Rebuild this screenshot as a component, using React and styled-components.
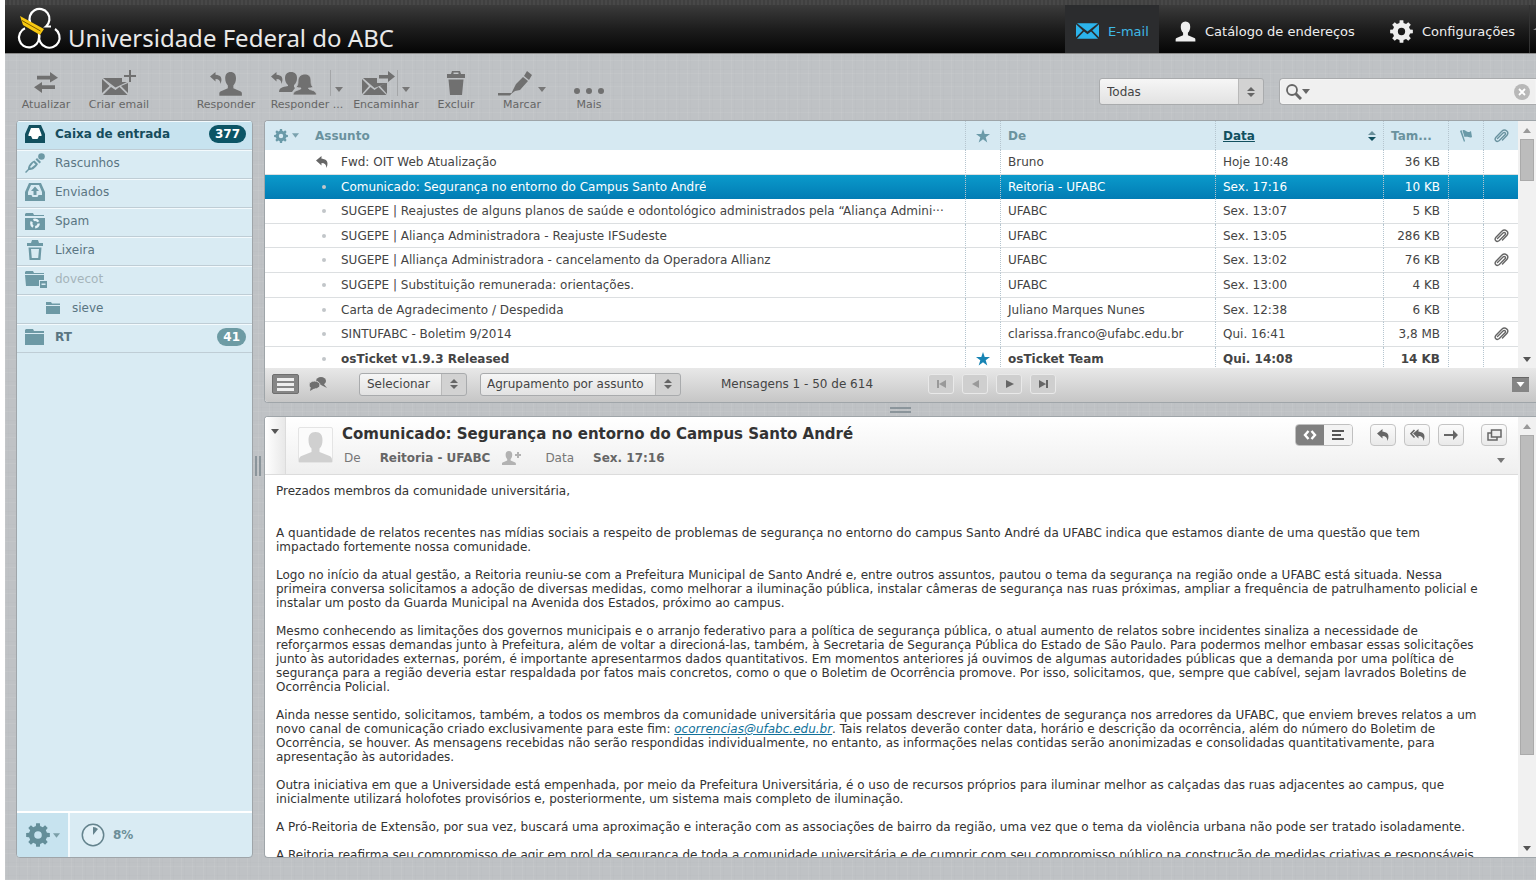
import React from "react";
import styled, { createGlobalStyle, css } from "styled-components";

const Global = createGlobalStyle`
  * { box-sizing: border-box; }
  html, body, #root { height: 100%; }
  body { margin: 0; background: #fff; overflow: hidden; font-family: "DejaVu Sans", sans-serif; font-size: 12px; color: #444; }
  button, input, select { font: inherit; color: inherit; }
  button { padding: 0; border: 0; background: none; cursor: pointer; }
  svg { display: block; flex: none; }
  ul { list-style: none; margin: 0; padding: 0; }
`;

const Page = styled.div`
  height: 100%;
  margin-left: 5px;
  display: flex;
  flex-direction: column;
  background-color: #bfc2c5;
  background-image:
    repeating-linear-gradient(90deg, rgba(255,255,255,.06) 0 1px, transparent 1px 3px, rgba(90,95,100,.02) 3px 4px, transparent 4px 11px),
    repeating-linear-gradient(0deg, rgba(255,255,255,.06) 0 1px, transparent 1px 4px, rgba(90,95,100,.02) 4px 5px, transparent 5px 13px);
`;
const TopStrip = styled.div`
  flex: none;
  height: 5px;
  background: repeating-linear-gradient(90deg, #484848 0 2px, #404040 2px 4px);
`;
const Header = styled.header`
  flex: none;
  height: 49px;
  display: flex;
  justify-content: space-between;
  background: linear-gradient(#3b3b3b, #1d1d1d 50%, #050505);
  border-bottom: 1px solid #888;
`;
const Brand = styled.div`
  display: flex;
  padding-left: 12px;
  gap: 6px;
  color: #e9e9e9;
  font: 24px/32px "Noto Sans", sans-serif;
  white-space: nowrap;
  & > span { margin-top: 17px; }
`;
const Tasks = styled.nav`
  display: flex;
`;
const Task = styled.a`
  display: flex;
  align-items: center;
  gap: 9px;
  min-width: ${(p) => p.$w}px;
  padding: 4px 0 0 11px;
  margin-right: ${(p) => p.$after || 0}px;
  font-size: 13px;
  white-space: nowrap;
  text-decoration: none;
  color: ${(p) => (p.$active ? "#3fb9e6" : "#eee")};
  background: ${(p) => (p.$active ? "#2b2c2e" : "none")};
`;
const TaskEdge = styled.div`
  width: 7px;
  border-left: 1px solid #333;
  display: flex;
  align-items: center;
  justify-content: flex-end;
`;

const Toolbar = styled.div`
  flex: none;
  height: 66px;
  display: flex;
  justify-content: space-between;
  padding-left: 6px;
`;
const Tools = styled.div`
  display: flex;
  align-items: flex-start;
  padding-top: 14px;
`;
const ToolButton = styled.button`
  width: ${(p) => p.$w}px;
  margin-right: ${(p) => p.$after || 0}px;
  display: flex;
  flex-direction: column;
  align-items: center;
  font-size: 11px;
  line-height: 14px;
  color: #666;
  white-space: nowrap;
`;
const ToolIcon = styled.span`
  height: 30px;
  display: flex;
  align-items: center;
`;
const Split = styled.span`
  display: flex;
  align-items: center;
  height: 26px;
  margin-left: ${(p) => p.$gap}px;
  padding: 12px 0 0 4px;
  border-left: 1px solid ${(p) => (p.$line ? "#a4a6a8" : "transparent")};
`;
const Filters = styled.div`
  display: flex;
  gap: 15px;
  padding-top: 24px;
`;
const SelectBox = styled.label`
  position: relative;
  display: block;
  width: ${(p) => p.$w}px;
  height: ${(p) => p.$h}px;
  border: 1px solid #a9abad;
  border-radius: 3px;
  background: linear-gradient(90deg, transparent calc(100% - 25px), #b9b9b9 calc(100% - 25px), #b9b9b9 calc(100% - 24px), #d2d2d2 0), linear-gradient(#f6f6f6, #e2e2e2);
  & > select {
    appearance: none;
    width: 100%;
    height: 100%;
    padding: 0 0 0 ${(p) => p.$pad || 7}px;
    border: 0;
    background: none;
    outline: none;
  }
  & > svg { position: absolute; right: 8px; top: calc(50% - 5px); pointer-events: none; }
`;
const Search = styled.label`
  width: 257px;
  height: 27px;
  display: flex;
  align-items: center;
  padding: 0 6px;
  border: 1px solid #a9abad;
  border-right: 0;
  border-radius: 4px 0 0 4px;
  background: #f0f0f0;
  box-shadow: inset 0 0 2px #fff;
  & > input { flex: 1; min-width: 0; border: 0; background: none; outline: none; }
`;

const Main = styled.div`
  flex: 1;
  min-height: 0;
  display: flex;
  gap: 11px;
  padding: 0 0 22px 11px;
`;
const Sidebar = styled.aside`
  flex: none;
  width: 237px;
  display: flex;
  flex-direction: column;
  border: 1px solid #9fa5a9;
  border-radius: 4px;
  background: #d9ebf3;
  overflow: hidden;
`;
const Folders = styled.ul`
  flex: 1;
`;
const Folder = styled.li`
  height: 29px;
  display: flex;
  align-items: center;
  padding: 0 6px 2px ${(p) => (p.$sub ? 29 : 8)}px;
  border-bottom: 1px solid #bfcdd5;
  box-shadow: inset 0 1px #f3fafd;
  background: ${(p) => (p.$active ? "#c7e3ef" : "none")};
  color: ${(p) => (p.$active ? "#164c5c" : p.$dim ? "#a5b4ba" : "#5a7582")};
  font-weight: ${(p) => (p.$bold ? 700 : 400)};
`;
const FolderLink = styled.a`
  flex: 1;
  display: flex;
  align-items: center;
  gap: ${(p) => (p.$sub ? 12 : 10)}px;
  color: inherit;
  text-decoration: none;
`;
const FolderIcon = styled.span`
  width: ${(p) => (p.$sub ? 14 : 20)}px;
`;
const Badge = styled.span`
  padding: 0 6px;
  border-radius: 9px;
  background: ${(p) => (p.$dark ? "#0c5566" : "#6d9ba4")};
  color: #fff;
  line-height: 18px;
  font-weight: 700;
`;
const SideFoot = styled.div`
  height: 46px;
  display: flex;
  border-top: 2px solid #fff;
`;
const GearButton = styled.button`
  width: 53px;
  display: flex;
  align-items: center;
  justify-content: center;
  gap: 3px;
  background: #c7e3ef;
  border-right: 2px solid #f3fafd;
`;
const Quota = styled.div`
  display: flex;
  align-items: center;
  gap: 8px;
  padding-left: 11px;
  font-weight: 700;
  color: #6c8e98;
`;
const Grip = styled.div`
  flex: none;
  height: 13px;
  display: flex;
  flex-direction: ${(p) => (p.$row ? "row" : "column")};
  align-items: center;
  justify-content: center;
  gap: 2px;
  &::before, &::after {
    content: "";
    background: #8b959b;
    ${(p) => (p.$row ? css`width: 2px; height: 20px;` : css`width: 21px; height: 2px;`)}
  }
`;
const SideGrip = styled(Grip)`
  width: 10px;
  height: 20px;
  margin: 336px 0 0 -11px;
`;
const Content = styled.div`
  flex: 1;
  min-width: 0;
  display: flex;
  flex-direction: column;
  margin-left: -10px;
`;
const ListPanel = styled.section`
  flex: none;
  height: 283px;
  display: flex;
  flex-direction: column;
  border: 1px solid #9fa5a9;
  border-right: 0;
  border-radius: 4px 0 0 4px;
  background: #fff;
  overflow: hidden;
`;
const Scroller = styled.div`
  flex: 1;
  min-height: 0;
  display: flex;
`;
const TableClip = styled.div`
  flex: 1;
  min-width: 0;
  overflow: hidden;
`;
const Mails = styled.table`
  width: 100%;
  table-layout: fixed;
  border-collapse: separate;
  border-spacing: 0;
  line-height: 16px;
  th, td {
    padding: 0 7px;
    text-align: left;
    font-weight: inherit;
    white-space: nowrap;
    overflow: hidden;
    text-overflow: ellipsis;
    border-left: 1px dotted #b5c5cf;
  }
  th:first-child, td:first-child { border-left: 0; }
  td.num { text-align: right; padding-right: 8px; }
  th > svg, td > svg { margin: 0 auto; }
`;
const HeadRow = styled.tr`
  height: 29px;
  background: #d6e9f2;
  color: #6a929e;
  font-weight: 700;
`;
const MailRow = styled.tr`
  height: 25px;
  color: ${(p) => (p.$on ? "#fff" : "#444")};
  font-weight: ${(p) => (p.$unread ? 700 : 400)};
  background: ${(p) => (p.$on ? "linear-gradient(#0b9acb, #017cb4)" : "#fff")};
  &:nth-child(5n + 2), &:nth-child(5n + 4) { height: 24px; }
  td { border-bottom: ${(p) => (p.$on ? 0 : "1px solid #dcdfe1")}; }
`;
const HeadCell = styled.span`
  display: flex;
  align-items: center;
  justify-content: space-between;
`;
const SubjectHead = styled.span`
  display: flex;
  align-items: center;
  gap: 16px;
  & > button { display: flex; align-items: center; gap: 4px; padding-left: 2px; }
`;
const SortLink = styled.a`
  color: #12505f;
`;
const Subject = styled.span`
  display: flex;
  align-items: center;
  gap: 9px;
  padding-left: 44px;
  & > i { flex: none; width: 16px; }
  & > i::before { content: ""; display: block; width: 4px; height: 4px; margin: 0 auto; border-radius: 2px; background: #c2c6c9; }
  & > i:has(svg)::before { display: none; }
  & > span { overflow: hidden; text-overflow: ellipsis; }
`;
const Scrollbar = styled.div`
  flex: none;
  width: 18px;
  display: flex;
  flex-direction: column;
  align-items: center;
  justify-content: space-between;
  padding: 7px 1px 6px;
  background: #f1f1f1;
`;
const Thumb = styled.div`
  width: 14px;
  height: ${(p) => p.$h}px;
  margin: 6px 0 auto;
  background: #bcbcbc;
  border: 1px solid #aaa;
`;
const ListFoot = styled.div`
  flex: none;
  height: 34px;
  display: flex;
  align-items: center;
  padding: 0 7px 2px;
  background: linear-gradient(#e8e8e8, #c6c6c6);
`;
const ModeButton = styled.button`
  width: ${(p) => (p.$on ? 27 : 20)}px;
  height: 20px;
  display: flex;
  align-items: center;
  justify-content: center;
  margin-right: ${(p) => (p.$on ? 9 : 31)}px;
  background: ${(p) => (p.$on ? "#868686" : "none")};
  border: ${(p) => (p.$on ? "1px solid #6f6f6f" : "0")};
  border-radius: 2px;
`;
const Gap = styled.div`
  width: ${(p) => p.$w}px;
`;
const Count = styled.span`
  width: 206px;
  padding-left: 40px;
  white-space: nowrap;
`;
const Pager = styled.div`
  display: flex;
  gap: 8px;
`;
const PageButton = styled.button`
  width: 26px;
  height: 20px;
  display: flex;
  align-items: center;
  justify-content: center;
  border: 1px solid #e9e9e9;
  border-radius: 3px;
  background: #cfcfcf;
  color: ${(p) => (p.disabled ? "#999" : "#666")};
`;
const Collapse = styled.button`
  width: 17px;
  height: 15px;
  margin-left: auto;
  display: flex;
  align-items: center;
  justify-content: center;
  background: #858585;
  border-top: 1px solid #666;
`;
const PreviewPanel = styled.section`
  flex: 1;
  min-height: 0;
  display: flex;
  border: 1px solid #9fa5a9;
  border-right: 0;
  border-radius: 4px 0 0 4px;
  background: #fff;
  overflow: hidden;
`;
const Message = styled.article`
  flex: 1;
  min-width: 0;
  overflow: hidden;
`;
const MessageHead = styled.header`
  height: 58px;
  display: flex;
  border-bottom: 1px solid #dcdcdc;
  background: linear-gradient(#fff, #efefef);
`;
const Toggle = styled.button`
  width: 21px;
  padding-top: 12px;
  display: flex;
  justify-content: center;
  align-items: flex-start;
  border-right: 1px solid #dcdcdc;
  background: linear-gradient(90deg, #fff, #e8e8e8);
`;
const Avatar = styled.div`
  width: 35px;
  height: 36px;
  margin: 10px 0 0 12px;
  border: 1px solid #e4e4e4;
  border-radius: 2px;
  background: #fbfbfb;
`;
const Headings = styled.div`
  flex: 1;
  min-width: 0;
  padding: 7px 0 0 9px;
`;
const Title = styled.h2`
  margin: 0;
  font-size: 15px;
  line-height: 20px;
  color: #333;
`;
const Meta = styled.div`
  display: flex;
  align-items: center;
  padding-left: 2px;
  margin-top: 5px;
  line-height: 18px;
  color: #777;
  b { color: #666; margin: 0 12px 0 19px; }
  svg + span { margin-left: 24px; }
`;
const Side = styled.div`
  padding: 7px 11px 0 0;
  display: flex;
  flex-direction: column;
  align-items: flex-end;
  gap: 12px;
  & > svg { margin-right: 2px; }
`;
const Actions = styled.div`
  display: flex;
  gap: 8px;
`;
const Action = styled.button`
  width: 26px;
  height: 22px;
  display: flex;
  align-items: center;
  justify-content: center;
  border: 1px solid #c4c4c4;
  border-radius: 4px;
  background: linear-gradient(#fbfbfb, #e9e9e9);
  margin-left: ${(p) => p.$before || 0}px;
`;
const Segments = styled.div`
  display: flex;
  margin-right: 9px;
  border: 1px solid #c0c0c0;
  border-radius: 4px;
  overflow: hidden;
`;
const Segment = styled.button`
  width: 28px;
  height: 20px;
  display: flex;
  align-items: center;
  justify-content: center;
  background: ${(p) => (p.$on ? "#808080" : "#f3f3f3")};
`;
const Text = styled.div`
  padding: 9px 0 0 11px;
  line-height: 14px;
  color: #333;
  white-space: nowrap;
  p { margin: 0 0 14px; }
  p:first-child { margin-bottom: 28px; }
  a { color: #11719a; font-style: italic; }
`;

const Caret = ({ c = "#777", w = 8 }) => (
  <svg width={w} height="5" viewBox="0 0 8 5"><path d="M0 0h8L4 5z" fill={c} /></svg>
);
const CaretUp = () => <svg width="8" height="5" viewBox="0 0 8 5"><path d="M0 5h8L4 0z" fill="#999" /></svg>;
const UpDown = ({ up = "#666", down = "#666", w = 8 }) => (
  <svg width={w} height="10" viewBox="0 0 8 10"><path d="M0 4h8L4 0z" fill={up} /><path d="M0 6h8L4 10z" fill={down} /></svg>
);
const Envelope = ({ c = "#707070", w = 27, h = 18 }) => (
  <svg width={w} height={h} viewBox="0 0 24 16" fill={c}>
    <path d="M1 0h22L12 8.500z" /><path d="M0 1l7 6.500L0 14.500zM24 1l-7 6.500 7 7zM1 16l7.300-7.400L12 11.400l3.700-2.800L23 16z" />
  </svg>
);
const person = "M8 0c3 0 4.500 2 4.500 5 0 2.500-.9 4.600-2.200 5.700V13l6.200 2.600c.6.3.9.8.9 1.400V19H-1.400v-2c0-.6.300-1.100.9-1.400L5.700 13v-2.300C4.400 9.600 3.500 7.500 3.500 5 3.500 2 5 0 8 0z";
const gear = (n, r1, r2) => {
  const pts = [];
  for (let i = 0; i < n; i++) {
    for (const [f, r] of [[-0.3, r1], [-0.2, r2], [0.2, r2], [0.3, r1]]) {
      const a = ((i + f) / n) * Math.PI * 2;
      pts.push(`${(12 + r * Math.sin(a)).toFixed(2)} ${(12 - r * Math.cos(a)).toFixed(2)}`);
    }
  }
  return `M${pts.join("L")}z`;
};
const Gear = ({ c, s }) => (
  <svg width={s} height={s} viewBox="0 0 24 24">
    <path fillRule="evenodd" fill={c} d={gear(8, 9.2, 12) + "M12 8.200a3.800 3.800 0 1 0 0 7.600a3.800 3.800 0 1 0 0-7.600z"} />
  </svg>
);
const Star = ({ c }) => (
  <svg width="14" height="14" viewBox="0 0 14 14"><path fill={c} d="M7 0l1.700 5H14L9.700 8.200 11.300 13.500 7 10.300 2.700 13.500 4.300 8.200 0 5h5.300z" /></svg>
);
const Clip = ({ c = "#666" }) => (
  <svg width="16" height="14" viewBox="0 0 16 14" fill="none" stroke={c} strokeWidth="1.400" strokeLinecap="round">
    <path d="M4.500 9.500l5.500-5.500c1.600-1.400 3.300.2 2 1.800L6.300 11.500c-2.600 2.300-5.600-.4-3.300-3.200l5.800-6C12-.6 16.600 2.600 14 6.300L9.500 11" />
  </svg>
);
const bend = "M0 4.500L5.500 0v2.700c5 .2 7.500 3 5 9.300-.2-3.400-1.700-5-5-5V9.500z";
const Reply = ({ c = "#666" }) => <svg width="12" height="12" viewBox="0 0 12 12"><path d={bend} fill={c} /></svg>;
const ReplyAll = () => (
  <svg width="15" height="12" viewBox="0 0 15 12">
    <path d="M4.500 1L1 4.700 4.500 8.500" fill="none" stroke="#666" strokeWidth="1.600" /><path d={bend} fill="#666" transform="translate(3 0)" />
  </svg>
);
const G = "#707070";
const toolArt = {
  refresh: (
    <svg width="24" height="22" viewBox="0 0 24 22" fill={G}><path d="M3 4h13V0l8 6-8 5V8H3zM21 14H8v-3.500L0 16l8 6v-4h13z" transform="scale(1 .95)" /></svg>
  ),
  compose: (
    <svg width="34" height="26" viewBox="0 0 34 26" fill={G}>
      <path d="M1 8h19v4h5L13.500 17.500zM0 9l7.500 7L0 23zM26 13v10l-7-7zM1 25l8-8 4.500 3 4-3 8 8zM27 0h2v5h5v2h-5v5h-2V7h-5V5h5z" />
    </svg>
  ),
  reply: (
    <svg width="32" height="25" viewBox="0 0 32 25" fill={G}><path d={person} transform="translate(11 1) scale(1.200 1.250)" /><path d={bend} transform="translate(0 1)" /></svg>
  ),
  replyAll: (
    <svg width="46" height="25" viewBox="0 0 46 25" fill={G}>
      <path d={bend} transform="translate(0 1)" />
      <path d="M20 1c4 0 6 2.500 6 6 0 3-1 5.500-3 7v2l1 1-3 4H8c0-4 3-5 9-6v-1c-2-1.500-3-4-3-7 0-3.500 2-6 6-6z" />
      <path d="M34 3c5 0 6 4 6 7 0 3 .5 5 2 6-1.500 1-3 1-4.500 1 0 1 1 1.500 3 2 3 .8 5 2 5 5H22c0-3 2-4 5-5 2-.6 3-1 3-2-2 0-3.500-.3-5-1 1.500-1 2-3 2-6s2-7 7-7z" stroke="#c0c2c4" strokeWidth=".8" />
    </svg>
  ),
  forward: (
    <svg width="33" height="25" viewBox="0 0 33 25" fill={G}>
      <path d="M1 7h14v5h10L12.500 17zM0 8l7 7-7 8zM25 12v11l-7-8zM1 24l7.500-8 4 3 4-3 8 8zM17 4h9V0l7 5.500L26 11V7.500h-9z" />
    </svg>
  ),
  trash: (
    <svg width="20" height="24" viewBox="0 0 20 24" fill={G}><path d="M1 3h4l1-3h8l1 3h4v4H1zM7.500 1.500V3h5V1.500zM2.500 8.500h15L16 24H4z" fillRule="evenodd" /></svg>
  ),
  mark: (
    <svg width="35" height="25" viewBox="0 0 35 25" fill={G}><path d="M29 0l5 4-3 5-5-4zM25 6l5 4-8 9-5 1-4 3 3-6 2-4zM0 22h14l-2 2.500H0z" /></svg>
  ),
  more: (
    <svg width="32" height="24" viewBox="0 0 32 24" fill={G}><circle cx="4" cy="20" r="3" /><circle cx="16" cy="20" r="3" /><circle cx="28" cy="20" r="3" /></svg>
  ),
};
const tools = [
  { label: "Atualizar", art: "refresh", w: 70 },
  { label: "Criar email", art: "compose", w: 76, after: 32 },
  { label: "Responder", art: "reply", w: 74 },
  { label: "Responder ...", art: "replyAll", w: 88, split: 13, line: true },
  { label: "Encaminhar", art: "forward", w: 70, split: 2, line: true },
  { label: "Excluir", art: "trash", w: 70 },
  { label: "Marcar", art: "mark", w: 62, split: 0 },
  { label: "Mais", art: "more", w: 72 },
];

const F = "#6d99a5";
const tray = "M4 0h12l4 9v9H0V9zM6 3L3.500 9.500V11H6l1.500 3h5L14 11h2.500V9.500L14 3z";
const folderArt = {
  inbox: <svg width="20" height="18" viewBox="0 0 20 18"><path d="M5 2h10l3 9-4 4H6l-4-4z" fill="#fff" /><path d={tray} fill="#12505f" fillRule="evenodd" /></svg>,
  drafts: <svg width="20" height="20" viewBox="0 0 20 20" fill={F}><circle cx="16.500" cy="3.500" r="3.300" /><path d="M12 5l4 4-1.500 1.500-4-4zM9.500 7.500l3.500 3.500c-3 5-6 6-9 6L1 20l-1-1 3-3c0-3 2-6.500 6.500-8.500zM8.500 9.500L5 14l1 1 4.500-3.500z" fillRule="evenodd" /></svg>,
  sent: <svg width="20" height="18" viewBox="0 0 20 18" fill={F} fillRule="evenodd"><path d="M4 0h12l4 9v9H0V9zM6 2L3 9v3h3.500l1 2h5l1-2H17V9l-3-7z" /><path d="M10 3.500l4 4.500h-2.500v4h-3V8H6z" /></svg>,
  spam: <svg width="20" height="18" viewBox="0 0 20 18" fill={F}><path d="M1 1h7l1 2h10v1H0V2zM0 6h20v12H0z" /><circle cx="10" cy="11.500" r="3.700" fill="none" stroke="#e6f3f8" strokeWidth="2.400" strokeDasharray="5.500 2.200" /></svg>,
  trash: <svg width="20" height="20" viewBox="0 0 20 20" fill={F}><path d="M2 3h4l1-3h6l1 3h4v3H2zM3.500 7.500h13L15.500 20h-11zM6 9l.8 9h6.400l.8-9z" fillRule="evenodd" /></svg>,
  locked: <svg width="22" height="18" viewBox="0 0 22 18" fill={F}><path d="M1 1h7l1 2h10v1H0V2zM0 5h19v5h-5v6H1z" /><path d="M15 11h7v7h-7zM16.500 13.500v1.500h4v-1.500z" fillRule="evenodd" /></svg>,
  folder: <svg width="20" height="16" viewBox="0 0 20 16" fill={F}><path d="M1 0h7l1 2h10v2H0V1zM0 5h19v11H0z" /></svg>,
  small: <svg width="14" height="12" viewBox="0 0 14 12" fill={F}><path d="M0 0h5l1 1.500h8V3H0zM0 4h14v8H0z" /></svg>,
};
const folders = [
  { name: "Caixa de entrada", art: "inbox", count: 377, active: true, bold: true },
  { name: "Rascunhos", art: "drafts" },
  { name: "Enviados", art: "sent" },
  { name: "Spam", art: "spam" },
  { name: "Lixeira", art: "trash" },
  { name: "dovecot", art: "locked", dim: true },
  { name: "sieve", art: "small", sub: true },
  { name: "RT", art: "folder", count: 41, bold: true },
];
const mails = [
  { s: "Fwd: OIT Web Atualização", f: "Bruno", d: "Hoje 10:48", z: "36 KB", replied: true },
  { s: "Comunicado: Segurança no entorno do Campus Santo André", f: "Reitoria - UFABC", d: "Sex. 17:16", z: "10 KB", on: true },
  { s: "SUGEPE | Reajustes de alguns planos de saúde e odontológico administrados pela “Aliança Admini···", f: "UFABC", d: "Sex. 13:07", z: "5 KB" },
  { s: "SUGEPE | Aliança Administradora - Reajuste IFSudeste", f: "UFABC", d: "Sex. 13:05", z: "286 KB", clip: true },
  { s: "SUGEPE | Alliança Administradora - cancelamento da Operadora Allianz", f: "UFABC", d: "Sex. 13:02", z: "76 KB", clip: true },
  { s: "SUGEPE | Substituição remunerada: orientações.", f: "UFABC", d: "Sex. 13:00", z: "4 KB" },
  { s: "Carta de Agradecimento / Despedida", f: "Juliano Marques Nunes", d: "Sex. 12:38", z: "6 KB" },
  { s: "SINTUFABC - Boletim 9/2014", f: "clarissa.franco@ufabc.edu.br", d: "Qui. 16:41", z: "3,8 MB", clip: true },
  { s: "osTicket v1.9.3 Released", f: "osTicket Team", d: "Qui. 14:08", z: "14 KB", unread: true },
];
const mailto = <a href="mailto:ocorrencias@ufabc.edu.br">ocorrencias@ufabc.edu.br</a>;
const paragraphs = [
  ["Prezados membros da comunidade universitária,"],
  [
    "A quantidade de relatos recentes nas mídias sociais a respeito de problemas de segurança no entorno do campus Santo André da UFABC indica que estamos diante de uma questão que tem",
    "impactado fortemente nossa comunidade.",
  ],
  [
    "Logo no início da atual gestão, a Reitoria reuniu-se com a Prefeitura Municipal de Santo André e, entre outros assuntos, pautou o tema da segurança na região onde a UFABC está situada. Nessa",
    "primeira conversa solicitamos a adoção de diversas medidas, como melhorar a iluminação pública, instalar câmeras de segurança nas ruas próximas, ampliar a frequência de patrulhamento policial e",
    "instalar um posto da Guarda Municipal na Avenida dos Estados, próximo ao campus.",
  ],
  [
    "Mesmo conhecendo as limitações dos governos municipais e o arranjo federativo para a política de segurança pública, o atual aumento de relatos sobre incidentes sinaliza a necessidade de",
    "reforçarmos essas demandas junto à Prefeitura, além de voltar a direcioná-las, também, à Secretaria de Segurança Pública do Estado de São Paulo. Para podermos melhor embasar essas solicitações",
    "junto às autoridades externas, porém, é importante apresentarmos dados quantitativos. Em momentos anteriores já ouvimos de algumas autoridades públicas que a demanda por uma política de",
    "segurança para a região deveria estar respaldada por fatos mais concretos, como o que o Boletim de Ocorrência promove. Por isso, solicitamos, que, sempre que cabível, sejam lavrados Boletins de",
    "Ocorrência Policial.",
  ],
  [
    "Ainda nesse sentido, solicitamos, também, a todos os membros da comunidade universitária que possam descrever incidentes de segurança nos arredores da UFABC, que enviem breves relatos a um",
    <>novo canal de comunicação criado exclusivamente para este fim: {mailto}. Tais relatos deverão conter data, horário e descrição da ocorrência, além do número do Boletim de</>,
    "Ocorrência, se houver. As mensagens recebidas não serão respondidas individualmente, no entanto, as informações nelas contidas serão anonimizadas e consolidadas quantitativamente, para",
    "apresentação às autoridades.",
  ],
  [
    "Outra iniciativa em que a Universidade está empenhada, por meio da Prefeitura Universitária, é o uso de recursos próprios para iluminar melhor as calçadas das ruas adjacentes ao campus, que",
    "inicialmente utilizará holofotes provisórios e, posteriormente, um sistema mais completo de iluminação.",
  ],
  ["A Pró-Reitoria de Extensão, por sua vez, buscará uma aproximação e interação com as associações de bairro da região, uma vez que o tema da violência urbana não pode ser tratado isoladamente."],
  ["A Reitoria reafirma seu compromisso de agir em prol da segurança de toda a comunidade universitária e de cumprir com seu compromisso público na construção de medidas criativas e responsáveis"],
];
const pages = [
  { label: "Primeira página", d: "M0 0h2v8H0zM9 0v8L2 4z", off: true },
  { label: "Página anterior", d: "M8 0v8L1 4z", off: true },
  { label: "Próxima página", d: "M1 0v8l8-4z" },
  { label: "Última página", d: "M0 0v8l7-4zM7 0h2v8H7z" },
];

export default function App() {
  return (
    <Page>
      <Global />
      <TopStrip />
      <Header>
        <Brand>
          <svg width="45" height="48" viewBox="0 0 45 48" fill="none" stroke="#fff" strokeWidth="2.200">
            <path d="M13.300 18A10 10 0 1 1 29 21.500h5" />
            <path d="M8 23.300A10 10 0 1 0 22 32.500V28" />
            <path d="M22.500 30A10.200 10.200 0 1 0 38 24" />
            <path d="M3 11L27 24l-4 6L6 20z" fill="#f8c810" stroke="none" />
            <path d="M5 15.500l18.500 10.500" stroke="#7a5a00" strokeWidth="1" />
          </svg>
          <span>Universidade Federal do ABC</span>
        </Brand>
        <Tasks>
          <Task href="#mail" $active $w={94} $after={5}><Envelope c="#2cb4ec" w={23} h={16} />E-mail</Task>
          <Task href="#contacts" $w={215}>
            <svg width="21" height="21" viewBox="-2 0 20 19"><path d={person} fill="#eee" /></svg>Catálogo de endereços
          </Task>
          <Task href="#settings" $w={150}><Gear c="#eee" s={23} />Configurações</Task>
          <TaskEdge><svg width="3" height="2" viewBox="0 0 3 2"><path d="M0 2h3V0z" fill="#888" /></svg></TaskEdge>
        </Tasks>
      </Header>
      <Toolbar>
        <Tools>
          {tools.map((t) => (
            <ToolButton key={t.label} type="button" $w={t.w} $after={t.after}>
              <ToolIcon>
                {toolArt[t.art]}
                {t.split !== undefined && <Split $gap={t.split} $line={t.line}><Caret /></Split>}
              </ToolIcon>
              {t.label}
            </ToolButton>
          ))}
        </Tools>
        <Filters>
          <SelectBox $w={165} $h={27}>
            <select aria-label="Filtro"><option>Todas</option></select>
            <UpDown />
          </SelectBox>
          <Search>
            <svg width="16" height="16" viewBox="0 0 16 16" fill="none" stroke="#666"><circle cx="6" cy="6" r="5" strokeWidth="1.800" /><path d="M9.500 9.500L15 15" strokeWidth="3" /></svg>
            <Caret c="#666" />
            <input type="text" aria-label="Pesquisar" />
            <svg width="16" height="16" viewBox="0 0 16 16"><circle cx="8" cy="8" r="8" fill="#b8b8b8" /><path d="M5 5l6 6M11 5l-6 6" stroke="#fff" strokeWidth="1.800" /></svg>
          </Search>
        </Filters>
      </Toolbar>
      <Main>
        <Sidebar>
          <Folders>
            {folders.map((f) => (
              <Folder key={f.name} $active={f.active} $dim={f.dim} $bold={f.bold} $sub={f.sub}>
                <FolderLink href="#folder" $sub={f.sub}><FolderIcon $sub={f.sub}>{folderArt[f.art]}</FolderIcon>{f.name}</FolderLink>
                {f.count && <Badge $dark={f.active}>{f.count}</Badge>}
              </Folder>
            ))}
          </Folders>
          <SideFoot>
            <GearButton type="button" aria-label="Ações"><Gear c="#648e99" s={24} /><Caret c="#7b9fa8" w={7} /></GearButton>
            <Quota>
              <svg width="24" height="24" viewBox="0 0 24 24"><circle cx="12" cy="12" r="10.700" fill="#e2f0f6" stroke="#64838d" strokeWidth="1.500" /><path d="M12 12V4a8 8 0 0 1 5 2z" fill="#64838d" /></svg>
              8%
            </Quota>
          </SideFoot>
        </Sidebar>
        <SideGrip $row />
        <Content>
          <ListPanel>
            <Scroller>
              <TableClip>
                <Mails>
                  <colgroup>
                    <col /><col width="35" /><col width="215" /><col width="168" /><col width="65" /><col width="35" /><col width="35" />
                  </colgroup>
                  <thead>
                    <HeadRow>
                      <th>
                        <SubjectHead><button type="button" aria-label="Opções da lista"><Gear c="#6a9aa8" s={14} /><Caret c="#7ba2ae" w={7} /></button>Assunto</SubjectHead>
                      </th>
                      <th><Star c="#6a9aa8" /></th>
                      <th>De</th>
                      <th><HeadCell><SortLink href="#sort">Data</SortLink><UpDown up="#6a8f9a" down="#12505f" /></HeadCell></th>
                      <th>Tam...</th>
                      <th><svg width="12" height="13" viewBox="0 0 12 13"><path d="M0 2l1.500-1L5 12l-1 1zM2.500 1.500C5 0 6 3 8 3c1.500 0 2.500-.5 3-1l1 6c-2.500 1.500-4-1-7.500 0z" fill="#6a9aa8" /></svg></th>
                      <th><Clip c="#6a93a0" /></th>
                    </HeadRow>
                  </thead>
                  <tbody>
                    {mails.map((m) => (
                      <MailRow key={m.s} $on={m.on} $unread={m.unread}>
                        <td><Subject><i>{m.replied && <Reply />}</i><span>{m.s}</span></Subject></td>
                        <td>{m.unread && <Star c="#1784b4" />}</td>
                        <td>{m.f}</td>
                        <td>{m.d}</td>
                        <td className="num">{m.z}</td>
                        <td />
                        <td>{m.clip && <Clip />}</td>
                      </MailRow>
                    ))}
                  </tbody>
                </Mails>
              </TableClip>
              <Scrollbar><CaretUp /><Thumb $h={42} /><Caret c="#555" /></Scrollbar>
            </Scroller>
            <ListFoot>
              <ModeButton type="button" $on aria-label="Lista"><svg width="17" height="13" viewBox="0 0 17 13"><path d="M0 0h17v3H0zM0 5h17v3H0zM0 10h17v3H0z" fill="#eee" /></svg></ModeButton>
              <ModeButton type="button" aria-label="Conversas"><svg width="18" height="14" viewBox="0 0 18 14" fill="#707070"><ellipse cx="12" cy="4" rx="5" ry="4" /><path d="M14 6l4 5-6-3z" /><ellipse cx="5.500" cy="8" rx="5.500" ry="4" stroke="#d8d8d8" /><path d="M2 9l-1 5 5-3z" /></svg></ModeButton>
              <SelectBox $w={108} $h={23}><select aria-label="Selecionar"><option>Selecionar</option></select><UpDown /></SelectBox>
              <Gap $w={13} />
              <SelectBox $w={201} $h={23} $pad={6}><select aria-label="Agrupamento"><option>Agrupamento por assunto</option></select><UpDown /></SelectBox>
              <Count>Mensagens 1 - 50 de 614</Count>
              <Gap $w={41} />
              <Pager>
                {pages.map((p) => (
                  <PageButton key={p.label} type="button" aria-label={p.label} disabled={p.off}><svg width="9" height="8" viewBox="0 0 9 8"><path d={p.d} fill="currentColor" /></svg></PageButton>
                ))}
              </Pager>
              <Collapse type="button" aria-label="Ocultar painel"><Caret c="#fff" w={9} /></Collapse>
            </ListFoot>
          </ListPanel>
          <Grip />
          <PreviewPanel>
            <Message>
              <MessageHead>
                <Toggle type="button" aria-label="Detalhes"><Caret c="#555" w={10} /></Toggle>
                <Avatar><svg width="33" height="34" viewBox="0 0 33 34"><path d="M16.500 4c5 0 7 3 7 8 0 4-1 6.500-3 8.500V24l10 4c1.500.6 2.500 2 2.500 4v2H0v-2c0-2 1-3.400 2.500-4l10-4v-3.500c-2-2-3-4.500-3-8.500 0-5 2-8 7-8z" fill="#d0d0d0" /></svg></Avatar>
                <Headings>
                  <Title>Comunicado: Segurança no entorno do Campus Santo André</Title>
                  <Meta>
                    <span>De</span><b>Reitoria - UFABC</b>
                    <svg width="19" height="14" viewBox="0 0 19 14" fill="#b2b2b2"><path d={person} transform="translate(1 0) scale(.74)" /><path d="M15 1h2v2h2v2h-2v2h-2V5h-2V3h2z" /></svg>
                    <span>Data</span><b>Sex. 17:16</b>
                  </Meta>
                </Headings>
                <Side>
                  <Actions>
                    <Segments>
                      <Segment type="button" $on aria-label="HTML"><svg width="14" height="10" viewBox="0 0 14 10" fill="none" stroke="#fff" strokeWidth="2.400"><path d="M5.500 1L2 5l3.500 4M8.500 1L12 5 8.500 9" /></svg></Segment>
                      <Segment type="button" aria-label="Texto"><svg width="12" height="10" viewBox="0 0 12 10"><path d="M0 0h12v2H0zM0 4h9v2H0zM0 8h12v2H0z" fill="#555" /></svg></Segment>
                    </Segments>
                    <Action type="button" aria-label="Responder"><Reply /></Action>
                    <Action type="button" aria-label="Responder a todos"><ReplyAll /></Action>
                    <Action type="button" aria-label="Encaminhar"><svg width="14" height="10" viewBox="0 0 14 10"><path d="M0 4h9V0l5 5-5 5V6H0z" fill="#666" /></svg></Action>
                    <Action type="button" $before={9} aria-label="Abrir em nova janela"><svg width="15" height="12" viewBox="0 0 15 12" fill="#eee" stroke="#666" strokeWidth="1.500"><path d="M1 4h9v7H1z" /><path d="M4.500 1H14v7H4.500z" /></svg></Action>
                  </Actions>
                  <Caret />
                </Side>
              </MessageHead>
              <Text>
                {paragraphs.map((lines, i) => (
                  <p key={i}>{lines.map((l, j) => <React.Fragment key={j}>{j > 0 && <br />}{l}</React.Fragment>)}</p>
                ))}
              </Text>
            </Message>
            <Scrollbar><CaretUp /><Thumb $h={320} /><Caret c="#555" /></Scrollbar>
          </PreviewPanel>
        </Content>
      </Main>
    </Page>
  );
}
